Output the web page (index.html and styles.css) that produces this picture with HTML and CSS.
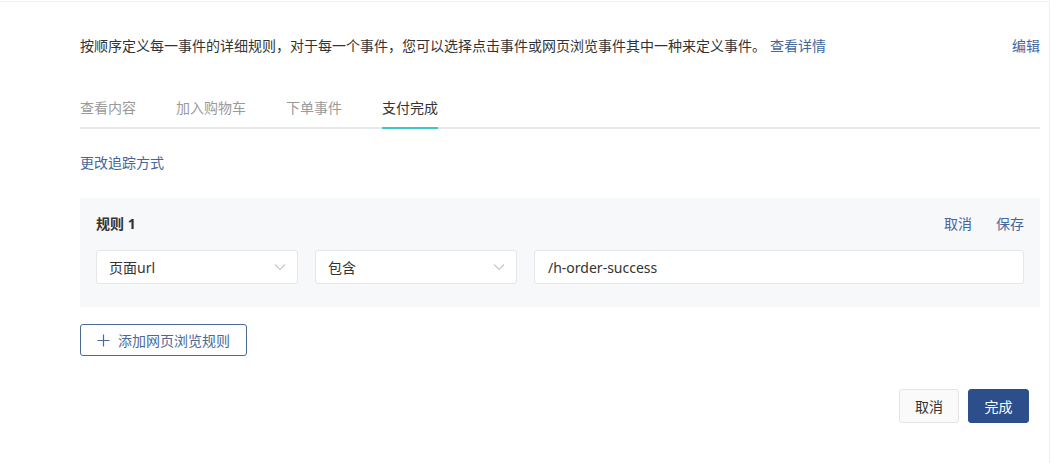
FILE: index.html
```html
<!DOCTYPE html>
<html lang="zh-CN">
<head>
<meta charset="utf-8">
<title>事件规则</title>
<link rel="stylesheet" href="styles.css">
</head>
<body>
<div class="card">
  <div class="desc-row">
    <p class="desc">按顺序定义每一事件的详细规则，对于每一个事件，您可以选择点击事件或网页浏览事件其中一种来定义事件。<a class="link detail">查看详情</a></p>
    <a class="link">编辑</a>
  </div>

  <div class="tabs">
    <span class="tab">查看内容</span>
    <span class="tab">加入购物车</span>
    <span class="tab">下单事件</span>
    <span class="tab active">支付完成</span>
  </div>

  <a class="link change">更改追踪方式</a>

  <div class="rule">
    <div class="rule-head">
      <span class="rule-title">规则 1</span>
      <div class="rule-actions">
        <a class="link">取消</a>
        <a class="link">保存</a>
      </div>
    </div>
    <div class="rule-fields">
      <div class="select">
        <span>页面url</span>
        <svg class="chev" width="12" height="8" viewBox="0 0 12 8"><path d="M1 1.5 L6 6.5 L11 1.5" fill="none" stroke="#c4c8cf" stroke-width="1.2"/></svg>
      </div>
      <div class="select">
        <span>包含</span>
        <svg class="chev" width="12" height="8" viewBox="0 0 12 8"><path d="M1 1.5 L6 6.5 L11 1.5" fill="none" stroke="#c4c8cf" stroke-width="1.2"/></svg>
      </div>
      <div class="input">/h-order-success</div>
    </div>
  </div>

  <button class="add-btn">
    <svg width="13" height="13" viewBox="0 0 13 13"><path d="M6.5 0.5 V12.5 M0.5 6.5 H12.5" stroke="#4b6a94" stroke-width="1.2" fill="none"/></svg>
    <span>添加网页浏览规则</span>
  </button>

  <div class="footer">
    <button class="btn btn-default">取消</button>
    <button class="btn btn-primary">完成</button>
  </div>
</div>
</body>
</html>
```

FILE: styles.css
```css
* { box-sizing: border-box; }

html, body {
  margin: 0;
  padding: 0;
  background: #ffffff;
}

body {
  font-family: "Noto Sans", "Noto Sans CJK SC", sans-serif;
  font-size: 14px;
  color: #333333;
}

.card {
  width: 1050px;
  height: 463px;
  margin-top: 1px;
  border-top: 1px solid #f1f2f4;
  border-right: 1px solid #eef0f2;
  padding: 33px 9px 0 80px;
}

.link {
  color: #44669c;
  cursor: pointer;
  text-decoration: none;
}

.desc-row {
  display: flex;
  justify-content: space-between;
  align-items: center;
  line-height: 22px;
}

.desc {
  margin: 0;
}

.detail {
  margin-left: 4px;
}

.tabs {
  display: flex;
  gap: 40px;
  margin-top: 40px;
  border-bottom: 2px solid #e8e9eb;
  line-height: 22px;
}

.tab {
  color: #9a9a9a;
  padding-bottom: 8px;
  margin-bottom: -2px;
  border-bottom: 2px solid transparent;
}

.tab.active {
  color: #333333;
  border-bottom-color: #3ec8c6;
}

.change {
  display: block;
  margin-top: 23px;
  line-height: 22px;
}

.rule {
  margin-top: 24px;
  background: #f7f8fa;
  padding: 15px 16px 23px 16px;
}

.rule-head {
  display: flex;
  justify-content: space-between;
  align-items: center;
  line-height: 22px;
}

.rule-title {
  font-weight: bold;
  color: #333333;
}

.rule-actions {
  display: flex;
  gap: 24px;
}

.rule-fields {
  display: grid;
  grid-template-columns: 202px 202px 1fr;
  gap: 17px;
  margin-top: 15px;
}

.select, .input {
  height: 34px;
  background: #ffffff;
  border: 1px solid #e4e6ea;
  border-radius: 3px;
  display: flex;
  align-items: center;
  color: #333333;
}

.select {
  justify-content: space-between;
  padding: 0 11px 0 12px;
}

.input {
  padding: 0 13px;
}

.chev { display: block; }

.add-btn {
  margin-top: 17px;
  height: 32px;
  display: flex;
  align-items: center;
  gap: 8px;
  padding: 0 16px;
  background: #ffffff;
  border: 1px solid #4b6a94;
  border-radius: 3px;
  color: #4b6a94;
  font-family: inherit;
  font-size: 14px;
  white-space: nowrap;
}

.add-btn svg { display: block; }

.footer {
  display: flex;
  justify-content: flex-end;
  gap: 9px;
  margin-top: 33px;
  padding-right: 11px;
}

.btn {
  height: 34px;
  width: 61px;
  border-radius: 3px;
  font-family: inherit;
  font-size: 14px;
  padding: 0;
}

.btn-default {
  width: 60px;
  background: #fafafa;
  border: 1px solid #e3e4e6;
  color: #333333;
}

.btn-primary {
  background: #2c4f8c;
  border: 1px solid #2c4f8c;
  color: #ffffff;
}
```
